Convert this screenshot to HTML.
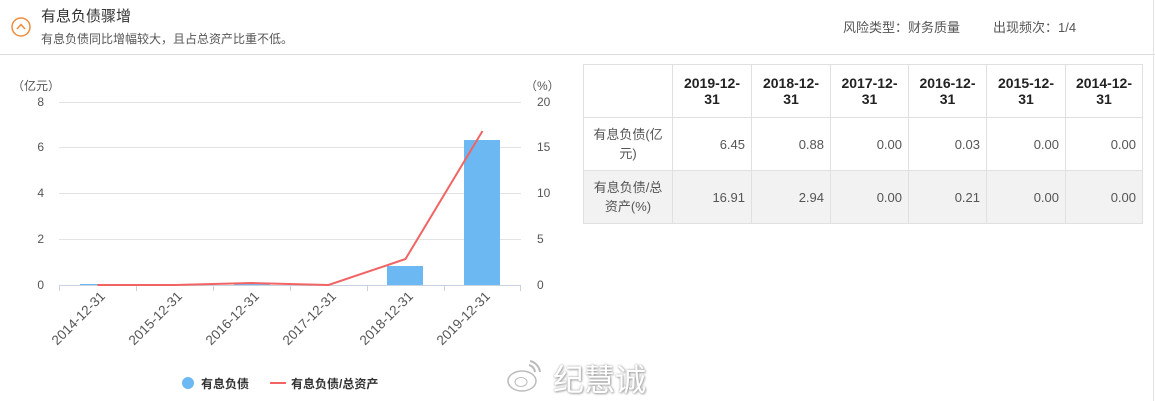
<!DOCTYPE html>
<html><head><meta charset="utf-8"><style>
*{margin:0;padding:0;box-sizing:border-box}
body{width:1155px;height:401px;background:#fff;font-family:"Liberation Sans","Noto Sans CJK SC",sans-serif;position:relative;overflow:hidden;color:#333}
.hdr{position:absolute;left:0;top:0;width:1155px;height:55px;border-bottom:1px solid #dcdcdc}
.t1{position:absolute;left:41px;top:5px;font-size:15px;color:#333}
.t2{position:absolute;left:41px;top:30px;font-size:12px;color:#555}
.rt{position:absolute;top:17px;font-size:13px;color:#555}
.rb{position:absolute;right:1px;top:0;width:1px;height:401px;background:#e2e2e2}
table{position:absolute;left:583px;top:64px;border-collapse:collapse;font-size:13px;table-layout:fixed}
td,th{border:1px solid #e0e0e0;height:53px;padding:0 6px}
th{font-weight:bold;font-size:14px;color:#222;line-height:16px;text-align:center}
td{text-align:right;color:#555}
td.l{text-align:center;line-height:19px;padding:0 3px}
tr.g td{background:#f2f2f2}
.wm{position:absolute;left:553px;top:355px;font-size:31px;color:#fff;text-shadow:0 0 2px #999,1px 1px 2px #aaa;letter-spacing:0}
</style></head><body>
<div class="hdr">
<svg style="position:absolute;left:10px;top:16px" width="22" height="22"><circle cx="11" cy="11" r="9" fill="none" stroke="#f08c3c" stroke-width="1.5"/><path d="M7 13 L11 8.5 L15 13" fill="none" stroke="#f08c3c" stroke-width="1.5"/></svg>
<div class="t1">有息负债骤增</div>
<div class="t2">有息负债同比增幅较大，且占总资产比重不低。</div>
<div class="rt" style="left:843px">风险类型：财务质量</div>
<div class="rt" style="left:993px">出现频次：1/4</div>
</div>
<div class="rb"></div>
<svg style="position:absolute;left:0;top:55px" width="580" height="346">
<g font-family="Liberation Sans,Noto Sans CJK SC,sans-serif" font-size="12" fill="#555">
<text x="12" y="35">（亿元）</text>
<text x="525" y="35">（%）</text>
<g stroke="#e3e3e3" stroke-width="1">
<line x1="59" y1="47.5" x2="521" y2="47.5"/><line x1="59" y1="92.5" x2="521" y2="92.5"/><line x1="59" y1="138.5" x2="521" y2="138.5"/><line x1="59" y1="184.5" x2="521" y2="184.5"/>
</g>
<g text-anchor="end"><text x="44" y="51">8</text><text x="44" y="96">6</text><text x="44" y="142">4</text><text x="44" y="188">2</text><text x="44" y="234">0</text></g>
<g><text x="537" y="51">20</text><text x="537" y="96">15</text><text x="537" y="142">10</text><text x="537" y="188">5</text><text x="537" y="234">0</text></g>
<rect x="387" y="211" width="36" height="19" fill="#6cb8f2"/>
<rect x="464" y="85" width="36" height="145" fill="#6cb8f2"/>
<rect x="80" y="229" width="36" height="1" fill="#6cb8f2"/>
<rect x="234" y="229" width="36" height="1" fill="#6cb8f2"/>
<line x1="59" y1="230.5" x2="521" y2="230.5" stroke="#c8d2e0"/>
<g stroke="#c8d2e0"><line x1="59.5" y1="230" x2="59.5" y2="236"/><line x1="136.5" y1="230" x2="136.5" y2="236"/><line x1="213.5" y1="230" x2="213.5" y2="236"/><line x1="290.5" y1="230" x2="290.5" y2="236"/><line x1="367.5" y1="230" x2="367.5" y2="236"/><line x1="444.5" y1="230" x2="444.5" y2="236"/><line x1="520.5" y1="230" x2="520.5" y2="236"/></g>
<polyline points="97.5,230 174.5,230 251.5,228 328.5,230 405.5,204 482.5,76" fill="none" stroke="#f26464" stroke-width="2"/>
<g text-anchor="end" font-size="13.5">
<text transform="translate(106,242) rotate(-45)">2014-12-31</text>
<text transform="translate(183,242) rotate(-45)">2015-12-31</text>
<text transform="translate(260,242) rotate(-45)">2016-12-31</text>
<text transform="translate(337,242) rotate(-45)">2017-12-31</text>
<text transform="translate(414,242) rotate(-45)">2018-12-31</text>
<text transform="translate(491,242) rotate(-45)">2019-12-31</text>
</g>
<circle cx="188" cy="328" r="6" fill="#6cb8f2"/>
<text x="201" y="333" fill="#333" font-weight="bold">有息负债</text>
<line x1="270" y1="328" x2="286" y2="328" stroke="#f26464" stroke-width="2"/>
<text x="291" y="333" fill="#333" font-weight="bold">有息负债/总资产</text>
</g>
</svg>
<svg style="position:absolute;left:505px;top:360px" width="48" height="34"><ellipse cx="17" cy="21" rx="14" ry="10" fill="#fff" stroke="#bbb" stroke-width="1.5"/><ellipse cx="16" cy="22" rx="6" ry="4.5" fill="none" stroke="#bbb"/><path d="M30 12 a8 8 0 0 0 -6 -7 M35 12 a13 13 0 0 0 -10 -11" fill="none" stroke="#bbb" stroke-width="2"/></svg>
<div class="wm">纪慧诚</div>
<table>
<colgroup><col style="width:89px"><col style="width:79px"><col style="width:79px"><col style="width:78px"><col style="width:78px"><col style="width:79px"><col style="width:77px"></colgroup>
<tr><th></th><th>2019-12-<br>31</th><th>2018-12-<br>31</th><th>2017-12-<br>31</th><th>2016-12-<br>31</th><th>2015-12-<br>31</th><th>2014-12-<br>31</th></tr>
<tr><td class="l">有息负债(亿<br>元)</td><td>6.45</td><td>0.88</td><td>0.00</td><td>0.03</td><td>0.00</td><td>0.00</td></tr>
<tr class="g"><td class="l">有息负债/总<br>资产(%)</td><td>16.91</td><td>2.94</td><td>0.00</td><td>0.21</td><td>0.00</td><td>0.00</td></tr>
</table>
</body></html>
